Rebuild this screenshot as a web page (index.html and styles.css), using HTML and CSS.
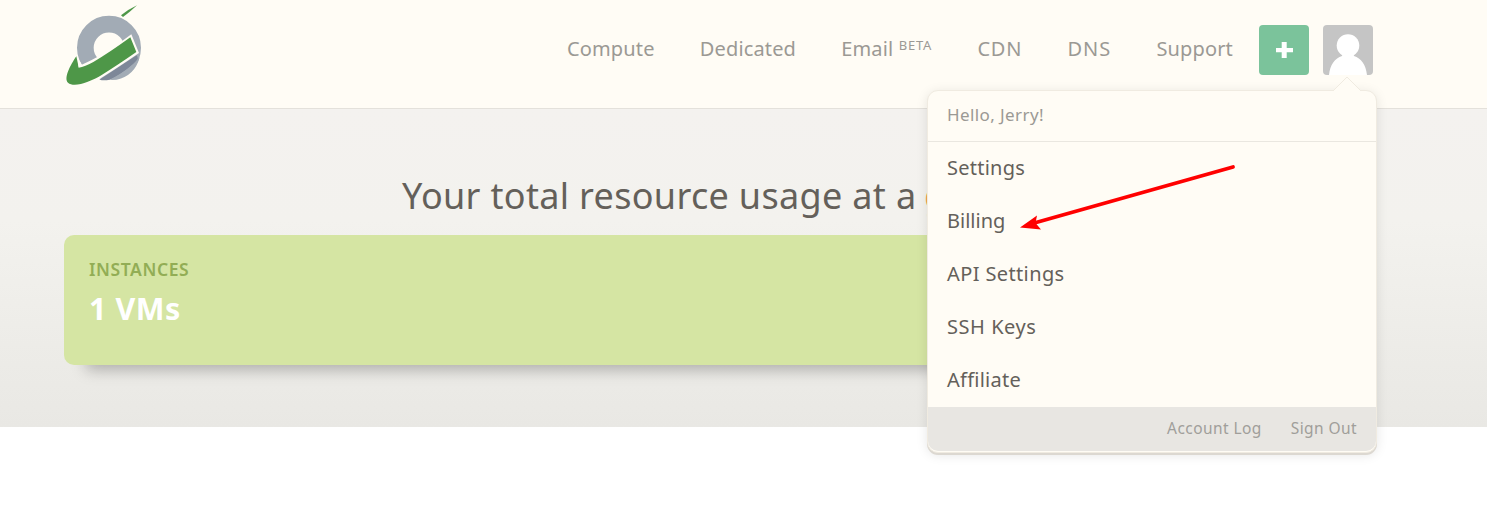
FILE: index.html
```html
<!DOCTYPE html>
<html lang="en">
<head>
<meta charset="utf-8">
<title>Dashboard</title>
<link rel="stylesheet" href="styles.css">
</head>
<body>
<header class="topbar">
  <svg class="logo" viewBox="0 0 330 345" aria-hidden="true">
    <circle cx="177" cy="143.500" r="71" fill="none" stroke="#a2abb5" stroke-width="50"/>
    <path d="M148 239L260 166Q268 176 256 188Q215 222 178 239Q163 242 148 239Z" fill="#7d8798"/>
    <path d="M180 240Q232 214 269 172Q254 228 200 239Z" fill="#a2abb5"/>
    <path d="M79 166L95 194Q155 170 244 103L267 159Q190 212 140 242Q110 256 70 256L84 200Z" fill="#fffcf5"/>
    <path d="M79 169C62 194 40 235 54 248C72 264 120 246 155 225Q203 195 259 156L241 112Q175 160 130 186Q105 200 86 203Q84 198 84 192Z" fill="#4e9748"/>
    <path d="M213 46Q235 28 261 16Q240 36 219 51Z" fill="#4e9748"/>
  </svg>
  <nav class="nav">
    <a class="compute">Compute</a>
    <a class="dedicated">Dedicated</a>
    <a class="email">Email <span class="beta">BETA</span></a>
    <a class="cdn">CDN</a>
    <a class="dns">DNS</a>
    <a class="support">Support</a>
  </nav>
  <div class="add"><svg viewBox="0 0 50 50"><path d="M22.700 17h5v6H34v4.300h-6.300V33h-5v-5.700H17V23h5.700z" fill="#fff"/></svg></div>
  <div class="account">
    <svg class="avatar" viewBox="0 0 50 50"><circle cx="25" cy="20.500" r="11.300" fill="#fff"/><path fill="#fff" d="M6 50C7 40 12 33 19 31L20 28H30L31 31C38 33 43 40 44 50Z"/></svg>
    <div class="menu">
      <svg class="pointer" viewBox="0 0 28 15"><path d="M0 15L14 1L28 15" fill="#fffcf5" stroke="#f0ebe1"/></svg>
      <div class="hello">Hello, Jerry!</div>
      <div class="items">
        <a class="settings">Settings</a>
        <a class="billing">Billing</a>
        <a class="api">API Settings</a>
        <a class="ssh">SSH Keys</a>
        <a class="affiliate">Affiliate</a>
      </div>
      <div class="foot"><a class="log">Account Log</a><a class="out">Sign Out</a></div>
    </div>
  </div>
</header>
<main class="usage">
  <h1>Your total resource usage at a <em>glance</em></h1>
  <section class="card">
    <h2>INSTANCES</h2>
    <p>1 VMs</p>
  </section>
</main>
<svg class="arrow" viewBox="0 0 230 80"><path d="M213 12L16 67.500" stroke="#f00" stroke-width="3.800" stroke-linecap="round"/><path d="M0 72.500L17 60.500L15.500 68L21 74.500Z" fill="#f00"/></svg>
</body>
</html>
```
FILE: styles.css
```css
* { box-sizing: border-box; }
body { margin: 0; height: 505px; overflow: hidden; background: #fff; color: #64605a; font-family: "Noto Sans", sans-serif; }
.topbar { height: 109px; display: flex; background: #fffcf5; border-bottom: 1px solid #e4e1db; padding-right: 114px; }
.logo { width: 110px; height: 115px; margin-left: 50px; flex: none; }
.nav { display: flex; gap: 45.2px; margin-left: auto; margin-right: 26px; padding-top: 34px; font-size: 20px; line-height: 30px; color: #9b9994; white-space: nowrap; }
.compute, .dedicated, .support, .email { letter-spacing: .15px; }
.cdn { letter-spacing: .8px; }
.dns { letter-spacing: 1px; }
.beta { font-size: 13px; letter-spacing: .8px; position: relative; top: -6px; }
.add, .account { width: 50px; height: 50px; margin-top: 25px; flex: none; }
.add { background: #7bc39b; border-radius: 4px; margin-right: 14px; }
.add svg { display: block; }
.account { position: relative; z-index: 2; }
.avatar { display: block; width: 50px; height: 50px; background: #c5c5c5; border-radius: 4px; }
.menu { position: absolute; top: 65px; right: -4px; width: 450px; height: 363px; background: #fffcf5; border: 1px solid #f0ebe1; border-radius: 11px; box-shadow: 0 2px 0 #dcd8d1, 0 2px 12px rgba(0,0,0,.1); }
.pointer { position: absolute; right: 15px; top: -15px; width: 28px; height: 15px; }
.hello { height: 51px; line-height: 48px; padding-left: 19px; font-size: 17px; letter-spacing: .4px; color: #9b9994; border-bottom: 1px solid #eae7e0; }
.items a { display: block; height: 53px; line-height: 51px; padding-left: 19px; font-size: 20px; }
.items .settings, .items .affiliate { letter-spacing: .25px; }
.items .api { letter-spacing: .38px; }
.items .ssh { letter-spacing: .55px; }
.foot { display: flex; justify-content: flex-end; gap: 29px; height: 44px; line-height: 43px; padding-right: 19px; background: #e8e6e2; border-radius: 0 0 10px 10px; font-size: 15.5px; letter-spacing: .42px; color: #a09e9a; }
.usage { height: 318px; padding: 63px 130px 0 64px; background: linear-gradient(#f4f2ef, #f3f2ee 35%, #e9e8e4); }
h1 { margin: 0; height: 63px; padding-left: 338px; font-size: 36px; font-weight: 400; letter-spacing: .33px; line-height: 48px; white-space: nowrap; }
h1 em { margin-left: -2px; color: #f4a052; font-style: normal; }
.card { height: 130px; padding: 22px 25px; border-radius: 10px; background: #d5e5a3; box-shadow: 12px 15px 14px -10px rgba(0,0,0,.26); }
h2 { margin: 0; font-size: 17.5px; letter-spacing: .6px; line-height: 25px; color: #92ad55; font-weight: 600; }
.card p { margin: 6px 0 0; font-size: 30.5px; letter-spacing: .5px; line-height: 40px; color: #fff; font-weight: 700; }
.arrow { position: absolute; z-index: 3; left: 1020px; top: 155px; width: 230px; height: 80px; fill: none; }
```
